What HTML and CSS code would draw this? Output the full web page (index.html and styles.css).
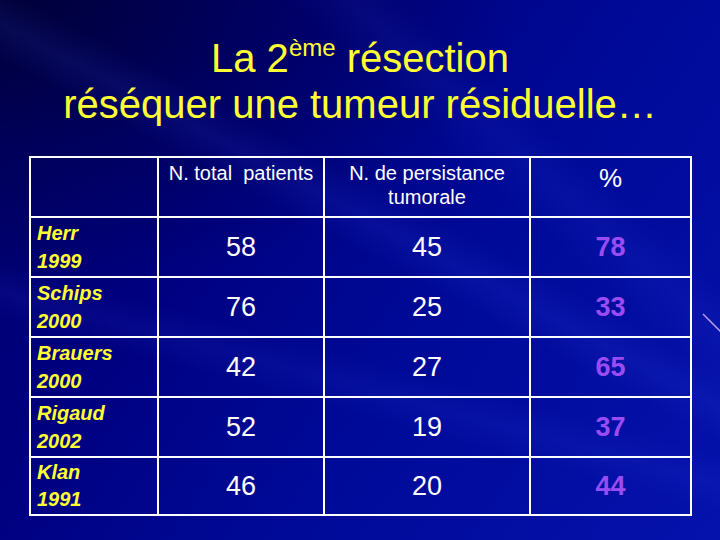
FILE: index.html
```html
<!DOCTYPE html>
<html lang="fr">
<head>
<meta charset="utf-8">
<title>La 2ème résection</title>
<link rel="stylesheet" href="styles.css">
</head>
<body>
<div class="slide">
  <div class="streaks"></div>
  <h1 class="title">
    <span class="line">La 2<sup>ème</sup> résection</span>
    <span class="line">réséquer une tumeur résiduelle…</span>
  </h1>
  <table class="data">
    <colgroup>
      <col class="c1"><col class="c2"><col class="c3"><col class="c4">
    </colgroup>
    <thead>
      <tr>
        <th></th>
        <th>N. total&nbsp; patients</th>
        <th>N. de persistance<br>tumorale</th>
        <th class="pct-head">%</th>
      </tr>
    </thead>
    <tbody>
      <tr><td class="label">Herr<br>1999</td><td>58</td><td>45</td><td class="pct">78</td></tr>
      <tr><td class="label">Schips<br>2000</td><td>76</td><td>25</td><td class="pct">33</td></tr>
      <tr><td class="label">Brauers<br>2000</td><td>42</td><td>27</td><td class="pct">65</td></tr>
      <tr><td class="label">Rigaud<br>2002</td><td>52</td><td>19</td><td class="pct">37</td></tr>
      <tr class="last"><td class="label">Klan<br>1991</td><td>46</td><td>20</td><td class="pct">44</td></tr>
    </tbody>
  </table>
  <svg class="deco" width="20" height="22" viewBox="0 0 20 22"><line x1="1" y1="1" x2="19" y2="19" stroke="#c9a2f0" stroke-width="1.3"/></svg>
</div>
</body>
</html>
```
FILE: styles.css
```css
html, body {
  margin: 0;
  padding: 0;
}
body {
  width: 720px;
  height: 540px;
  overflow: hidden;
  font-family: "Liberation Sans", Arial, sans-serif;
}
.slide {
  position: relative;
  width: 720px;
  height: 540px;
  display: flex;
  flex-direction: column;
  align-items: flex-start;
  background:
    radial-gradient(ellipse 520px 300px at 0% 0%, rgba(0,0,40,0.75) 0%, rgba(0,0,40,0.3) 50%, rgba(0,0,40,0) 100%),
    linear-gradient(125deg, #000068 0%, #00007e 30%, #000a98 60%, #0512ac 100%);
  overflow: hidden;
}
.streaks {
  position: absolute;
  inset: 0;
  background:
    linear-gradient(208deg, rgba(0,0,0,0) 40%, rgba(70,90,255,0.10) 44%, rgba(0,0,0,0) 48%),
    linear-gradient(222deg, rgba(0,0,0,0) 24%, rgba(70,90,255,0.08) 28%, rgba(0,0,0,0) 33%),
    linear-gradient(195deg, rgba(0,0,0,0) 62%, rgba(70,90,255,0.08) 66%, rgba(0,0,0,0) 70%);
  pointer-events: none;
}
.title {
  position: relative;
  align-self: stretch;
  margin: 0;
  padding-top: 35px;
  display: flex;
  flex-direction: column;
  align-items: center;
  color: #ffff33;
  font-weight: normal;
  font-size: 40px;
  line-height: 46px;
}
.title .line {
  display: block;
  white-space: nowrap;
}
.title sup {
  font-size: 24px;
  vertical-align: 16px;
  line-height: 0;
}
.data {
  position: relative;
  margin-top: 29px;
  margin-left: 29px;
  border-collapse: collapse;
  table-layout: fixed;
  width: 663px;
  border: 2px solid #ffffff;
  color: #ffffff;
}
.c1 { width: 128px; }
.c2 { width: 166px; }
.c3 { width: 206px; }
.c4 { width: 161px; }
.data th, .data td {
  border: 2px solid #ffffff;
  padding: 0;
}
.data th {
  height: 55px;
  vertical-align: top;
  font-weight: normal;
  font-size: 20px;
  line-height: 24px;
  padding-top: 3px;
  text-align: center;
}
.data th.pct-head {
  height: 53px;
  font-size: 26px;
  line-height: 30px;
  padding-top: 5px;
}
.data td {
  height: 58px;
  text-align: center;
  vertical-align: middle;
  font-size: 27px;
}
.data td.label {
  height: 57px;
  text-align: left;
  vertical-align: top;
  color: #ffff33;
  font-weight: bold;
  font-style: italic;
  font-size: 20px;
  line-height: 28px;
  padding: 1px 0 0 6px;
}
.data .last td {
  height: 56px;
}
.data .last td.label {
  height: 55px;
  line-height: 27px;
  padding-top: 1px;
}
.data td.pct {
  color: #9a4cf2;
  font-weight: bold;
}
.deco {
  position: absolute;
  left: 702px;
  top: 313px;
}
```
